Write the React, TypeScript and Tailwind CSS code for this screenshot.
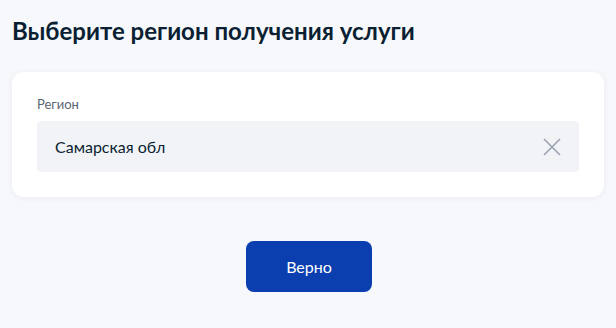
export default function App() {
  return (
    <div className="min-h-[328px] w-full bg-[#f6f8fb] px-3 pt-[15px] font-['Lato','Noto_Sans',sans-serif] text-[#0b1f33]">
      <h1 className="text-[24px] font-bold leading-[32px]">Выберите регион получения услуги</h1>

      <div className="mt-[25px] rounded-xl bg-white px-[25px] pt-[24px] pb-[25px] shadow-[0_1px_6px_rgba(11,31,51,0.06)]">
        <label className="block text-[13px] leading-4 text-[#5a6573]">Регион</label>
        <div className="mt-[9px] flex h-[51px] items-center justify-between rounded bg-[#f1f3f7] pl-[18px] pr-[17px]">
          <span className="text-base text-[#0b1f33]">Самарская обл</span>
          <button type="button" aria-label="Очистить" className="text-[#9aa3b0]">
            <svg width="20" height="20" viewBox="0 0 20 20" fill="none" stroke="currentColor" strokeWidth="1.6">
              <path d="M2 2L18 18M18 2L2 18" />
            </svg>
          </button>
        </div>
      </div>

      <div className="mt-11 flex justify-center">
        <button
          type="button"
          className="ml-[2px] h-[51px] w-[126px] rounded-lg bg-[#0b3fb0] text-base text-white"
        >
          Верно
        </button>
      </div>
    </div>
  );
}
